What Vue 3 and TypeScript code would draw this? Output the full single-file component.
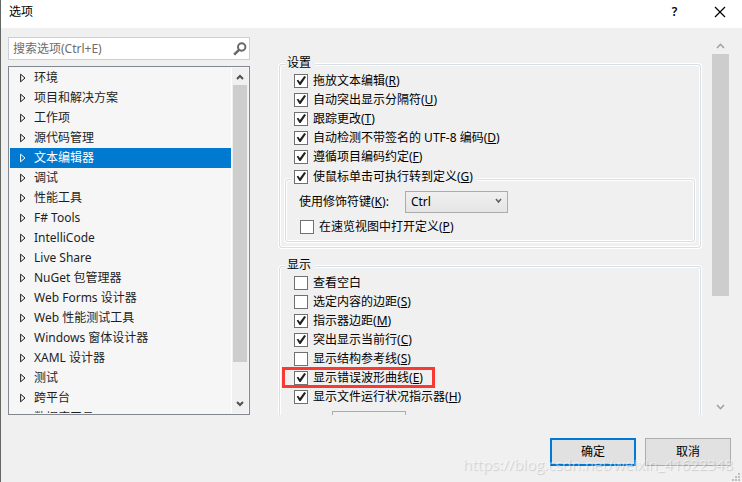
<script setup lang="ts">
import { ref } from 'vue'

interface Option {
  id: string
  text: string
  key?: string
  checked: boolean
  marked?: boolean
}

const categories: string[] = [
  '环境', '项目和解决方案', '工作项', '源代码管理', '文本编辑器', '调试', '性能工具',
  'F# Tools', 'IntelliCode', 'Live Share', 'NuGet 包管理器', 'Web Forms 设计器',
  'Web 性能测试工具', 'Windows 窗体设计器', 'XAML 设计器', '测试', '跨平台', '数据库工具',
]
const selected = ref('文本编辑器')
const query = ref('')
const modifier = ref('Ctrl')
const clickToDefinition = ref(true)
const openInPeek = ref(false)

const settings = ref<Option[]>([
  { id: 'drag', text: '拖放文本编辑', key: 'R', checked: true },
  { id: 'delimiter', text: '自动突出显示分隔符', key: 'U', checked: true },
  { id: 'track', text: '跟踪更改', key: 'T', checked: true },
  { id: 'utf8', text: '自动检测不带签名的 UTF-8 编码', key: 'D', checked: true },
  { id: 'convention', text: '遵循项目编码约定', key: 'F', checked: true },
])

const display = ref<Option[]>([
  { id: 'blank', text: '查看空白', checked: false },
  { id: 'selmargin', text: '选定内容的边距', key: 'S', checked: false },
  { id: 'indicator', text: '指示器边距', key: 'M', checked: true },
  { id: 'line', text: '突出显示当前行', key: 'C', checked: true },
  { id: 'guides', text: '显示结构参考线', key: 'S', checked: false },
  { id: 'squiggles', text: '显示错误波形曲线', key: 'E', checked: true, marked: true },
  { id: 'health', text: '显示文件运行状况指示器', key: 'H', checked: true },
])
</script>

<template>
  <main class="dialog">
    <header class="titlebar">
      <h1>选项</h1>
      <button type="button" class="caption help" aria-label="帮助">?</button>
      <button type="button" class="caption" aria-label="关闭">
        <svg width="12" height="12" viewBox="0 0 12 12"><path d="M1 1L11 11M11 1L1 11" fill="none" stroke="#000" stroke-width="1.2" /></svg>
      </button>
    </header>

    <div class="body">
      <nav class="side">
        <div class="search">
          <input v-model="query" type="text" aria-label="搜索选项" placeholder="搜索选项(Ctrl+E)" />
          <svg width="14" height="14" viewBox="0 0 14 14"><circle cx="8.7" cy="5" r="3.7" fill="none" stroke="#686868" stroke-width="2" /><path d="M6 7.8L1.2 12.6" stroke="#686868" stroke-width="2.6" /></svg>
        </div>
        <div class="tree">
          <ul>
            <li v-for="name in categories" :key="name">
              <button type="button" class="node" :class="{ active: name === selected }" @click="selected = name">
                <svg width="6" height="10" viewBox="0 0 6 10"><path d="M.6 1.2L5 5L.6 8.8Z" fill="none" stroke="currentColor" /></svg>
                <span>{{ name }}</span>
              </button>
            </li>
          </ul>
          <div class="bar">
            <svg width="8" height="6" viewBox="0 0 8 6"><path d="M1 5L4 2L7 5" fill="none" stroke="#505050" stroke-width="2" /></svg>
            <div class="track"><div class="thumb"></div></div>
            <svg width="8" height="6" viewBox="0 0 8 6"><path d="M1 1L4 4L7 1" fill="none" stroke="#505050" stroke-width="2" /></svg>
          </div>
        </div>
      </nav>

      <section class="page">
        <div class="groups">
          <fieldset>
            <legend class="caption-text">设置</legend>
            <label v-for="o in settings" :key="o.id" class="check">
              <input v-model="o.checked" type="checkbox" />
              <span>{{ o.text }}(<u>{{ o.key }}</u>)</span>
            </label>
            <fieldset class="nested">
              <legend class="check-legend">
                <label class="check">
                  <input v-model="clickToDefinition" type="checkbox" />
                  <span>使鼠标单击可执行转到定义(<u>G</u>)</span>
                </label>
              </legend>
              <div class="modifier">
                <label for="modifier">使用修饰符键(<u>K</u>):</label>
                <span class="combo">
                  <select id="modifier" v-model="modifier">
                    <option>Ctrl</option>
                    <option>Alt</option>
                  </select>
                  <svg width="7" height="6" viewBox="0 0 7 6"><path d="M1 1L3.5 4L6 1" fill="none" stroke="#606060" stroke-width="1.5" /></svg>
                </span>
              </div>
              <label class="check">
                <input v-model="openInPeek" type="checkbox" />
                <span>在速览视图中打开定义(<u>P</u>)</span>
              </label>
            </fieldset>
          </fieldset>

          <fieldset class="display">
            <legend class="caption-text">显示</legend>
            <label v-for="o in display" :key="o.id" class="check" :class="{ marked: o.marked }">
              <input v-model="o.checked" type="checkbox" />
              <span>{{ o.text }}<template v-if="o.key">(<u>{{ o.key }}</u>)</template></span>
            </label>
            <select class="more" aria-label="指示器位置"><option></option></select>
          </fieldset>
        </div>
        <div class="bar wide">
          <svg width="9" height="6" viewBox="0 0 9 6"><path d="M1 5L4.5 1.3L8 5" fill="none" stroke="#a0a0a0" stroke-width="1.6" /></svg>
          <div class="track"><div class="thumb"></div></div>
          <svg width="9" height="6" viewBox="0 0 9 6"><path d="M1 1L4.5 4.7L8 1" fill="none" stroke="#a0a0a0" stroke-width="1.6" /></svg>
        </div>
      </section>
    </div>

    <footer class="actions">
      <button type="button" class="push primary">确定</button>
      <button type="button" class="push">取消</button>
    </footer>
    <div class="watermark">https://blog.csdn.net/weixin_41622348</div>
    <svg class="grip" width="8" height="8" viewBox="0 0 8 8" fill="#bfbfbf"><path d="M6 0h2v2H6zM3 3h2v2H3zM6 3h2v2H6zM0 6h2v2H0zM3 6h2v2H3zM6 6h2v2H6z" /></svg>
  </main>
</template>

<style>
body {
  margin: 0;
}
</style>

<style scoped>
* {
  box-sizing: border-box;
}
.dialog {
  position: relative;
  display: flex;
  flex-direction: column;
  height: 100vh;
  overflow: hidden;
  border-left: 1px solid #626762;
  background: #f0f0f0;
  color: #000;
  font: 12px/16px "Noto Sans", "Noto Sans CJK SC", sans-serif;
}
button,
input,
select {
  margin: 0;
  font: inherit;
  color: inherit;
}
.titlebar {
  display: flex;
  align-items: center;
  flex: none;
  height: 28px;
  padding: 0 0 4px 8px;
  background: #fff;
}
h1 {
  flex: 1;
  margin: 0;
  font-size: 12px;
  font-weight: 400;
}
.caption {
  display: flex;
  align-items: center;
  justify-content: center;
  width: 45px;
  height: 24px;
  padding: 0;
  border: 0;
  background: none;
}
.help {
  font-weight: 600;
}
.body {
  display: flex;
  flex: 1;
  min-height: 0;
  gap: 28px;
  padding: 9px 13px 0 7px;
}
.side {
  display: flex;
  flex-direction: column;
  flex: none;
  gap: 6px;
  width: 242px;
}
.search {
  display: flex;
  align-items: center;
  flex: none;
  height: 23px;
  padding: 0 2px 0 4px;
  border: 1px solid #cccedb;
  background: #fff;
}
.search input {
  flex: 1;
  min-width: 0;
  padding: 0;
  border: 0;
  outline: 0;
  background: none;
}
.search input::placeholder {
  color: #6d6d6d;
  opacity: 1;
}
.tree {
  display: flex;
  flex: 1;
  min-height: 0;
  padding: 1px;
  border: 1px solid #828790;
  background: #f6f6f6;
}
ul {
  flex: 1;
  margin: 0;
  padding: 0;
  overflow: hidden;
  list-style: none;
}
.node {
  display: flex;
  align-items: center;
  gap: 8px;
  width: 100%;
  height: 20px;
  padding: 0 10px;
  border: 0;
  background: none;
  color: #1e1e1e;
}
.node.active {
  background: #007ad1;
  color: #fff;
}
.bar {
  display: flex;
  flex-direction: column;
  align-items: center;
  flex: none;
  width: 17px;
  padding: 6px 1px;
  border-left: 1px solid #fff;
  background: #f0f0f0;
}
.track {
  flex: 1;
  width: 100%;
  padding: 5px 0;
}
.thumb {
  height: 89%;
  background: #cdcdcd;
}
.page {
  display: flex;
  flex: 1;
  min-width: 0;
  gap: 10px;
}
.groups {
  flex: 1;
  min-width: 0;
  padding: 21px 1px 0;
  overflow: hidden;
}
.wide {
  padding: 6px 0 5px;
  border: 0;
}
.wide .thumb {
  height: 70%;
}
fieldset {
  min-width: 0;
  margin: 0;
  padding: 0 5px 5px;
  border: 1px solid #d5dfe5;
  border-radius: 3px;
  box-shadow: 0 0 0 1px #fff, inset 0 0 0 1px #fff;
}
legend {
  padding: 0 4px 0 2px;
  background: #f0f0f0;
}
.caption-text {
  height: 13px;
  padding-bottom: 4px;
  line-height: 9px;
}
.check {
  display: flex;
  align-items: center;
  gap: 5px;
  width: max-content;
  height: 19px;
  margin-left: 9px;
}
.check input {
  appearance: none;
  width: 14px;
  height: 14px;
  border: 1px solid #707070;
  background: #fff;
}
.check input:checked::before {
  content: "";
  display: block;
  width: 12px;
  height: 12px;
  background: #212121;
  clip-path: polygon(14% 50%, 27% 43%, 41% 62%, 77% 12%, 92% 20%, 47% 87%, 37% 87%);
}
.nested {
  margin-top: 1px;
}
.check-legend {
  padding: 0 4px 5px 3px;
}
.check-legend .check {
  margin-left: 0;
}
.modifier {
  display: flex;
  align-items: center;
  gap: 16px;
  margin: 0 0 4px 8px;
}
.combo {
  position: relative;
}
.combo select {
  appearance: none;
  display: block;
  width: 103px;
  height: 22px;
  padding: 0 5px;
  border: 1px solid #acacac;
  border-radius: 0;
  background: linear-gradient(#f0f0f0, #e5e5e5);
}
.combo svg {
  position: absolute;
  top: 7px;
  right: 6px;
}
.display {
  margin-top: 12px;
}
.marked {
  position: relative;
}
.marked::after {
  content: "";
  position: absolute;
  inset: -1px -12px;
  border: 3px solid #f73b33;
  pointer-events: none;
}
.more {
  appearance: none;
  display: block;
  width: 74px;
  height: 22px;
  margin: 5px 0 0 47px;
  border: 1px solid #acacac;
  border-radius: 0;
  background: #f0f0f0;
}
.actions {
  display: flex;
  justify-content: flex-end;
  flex: none;
  gap: 9px;
  padding: 23px 11px 16px;
}
.push {
  width: 86px;
  height: 28px;
  padding: 0;
  border: 1px solid #adadad;
  background: #e1e1e1;
}
.primary {
  border: 2px solid #0078d7;
}
.watermark {
  position: absolute;
  right: 9px;
  bottom: 7px;
  color: rgba(255, 255, 255, 0.5);
  font: 15px/22px "Open Sans", sans-serif;
  text-shadow: 1px 1px 1px rgba(0, 0, 0, 0.15);
  pointer-events: none;
}
.grip {
  position: absolute;
  right: 2px;
  bottom: 1px;
}
</style>
